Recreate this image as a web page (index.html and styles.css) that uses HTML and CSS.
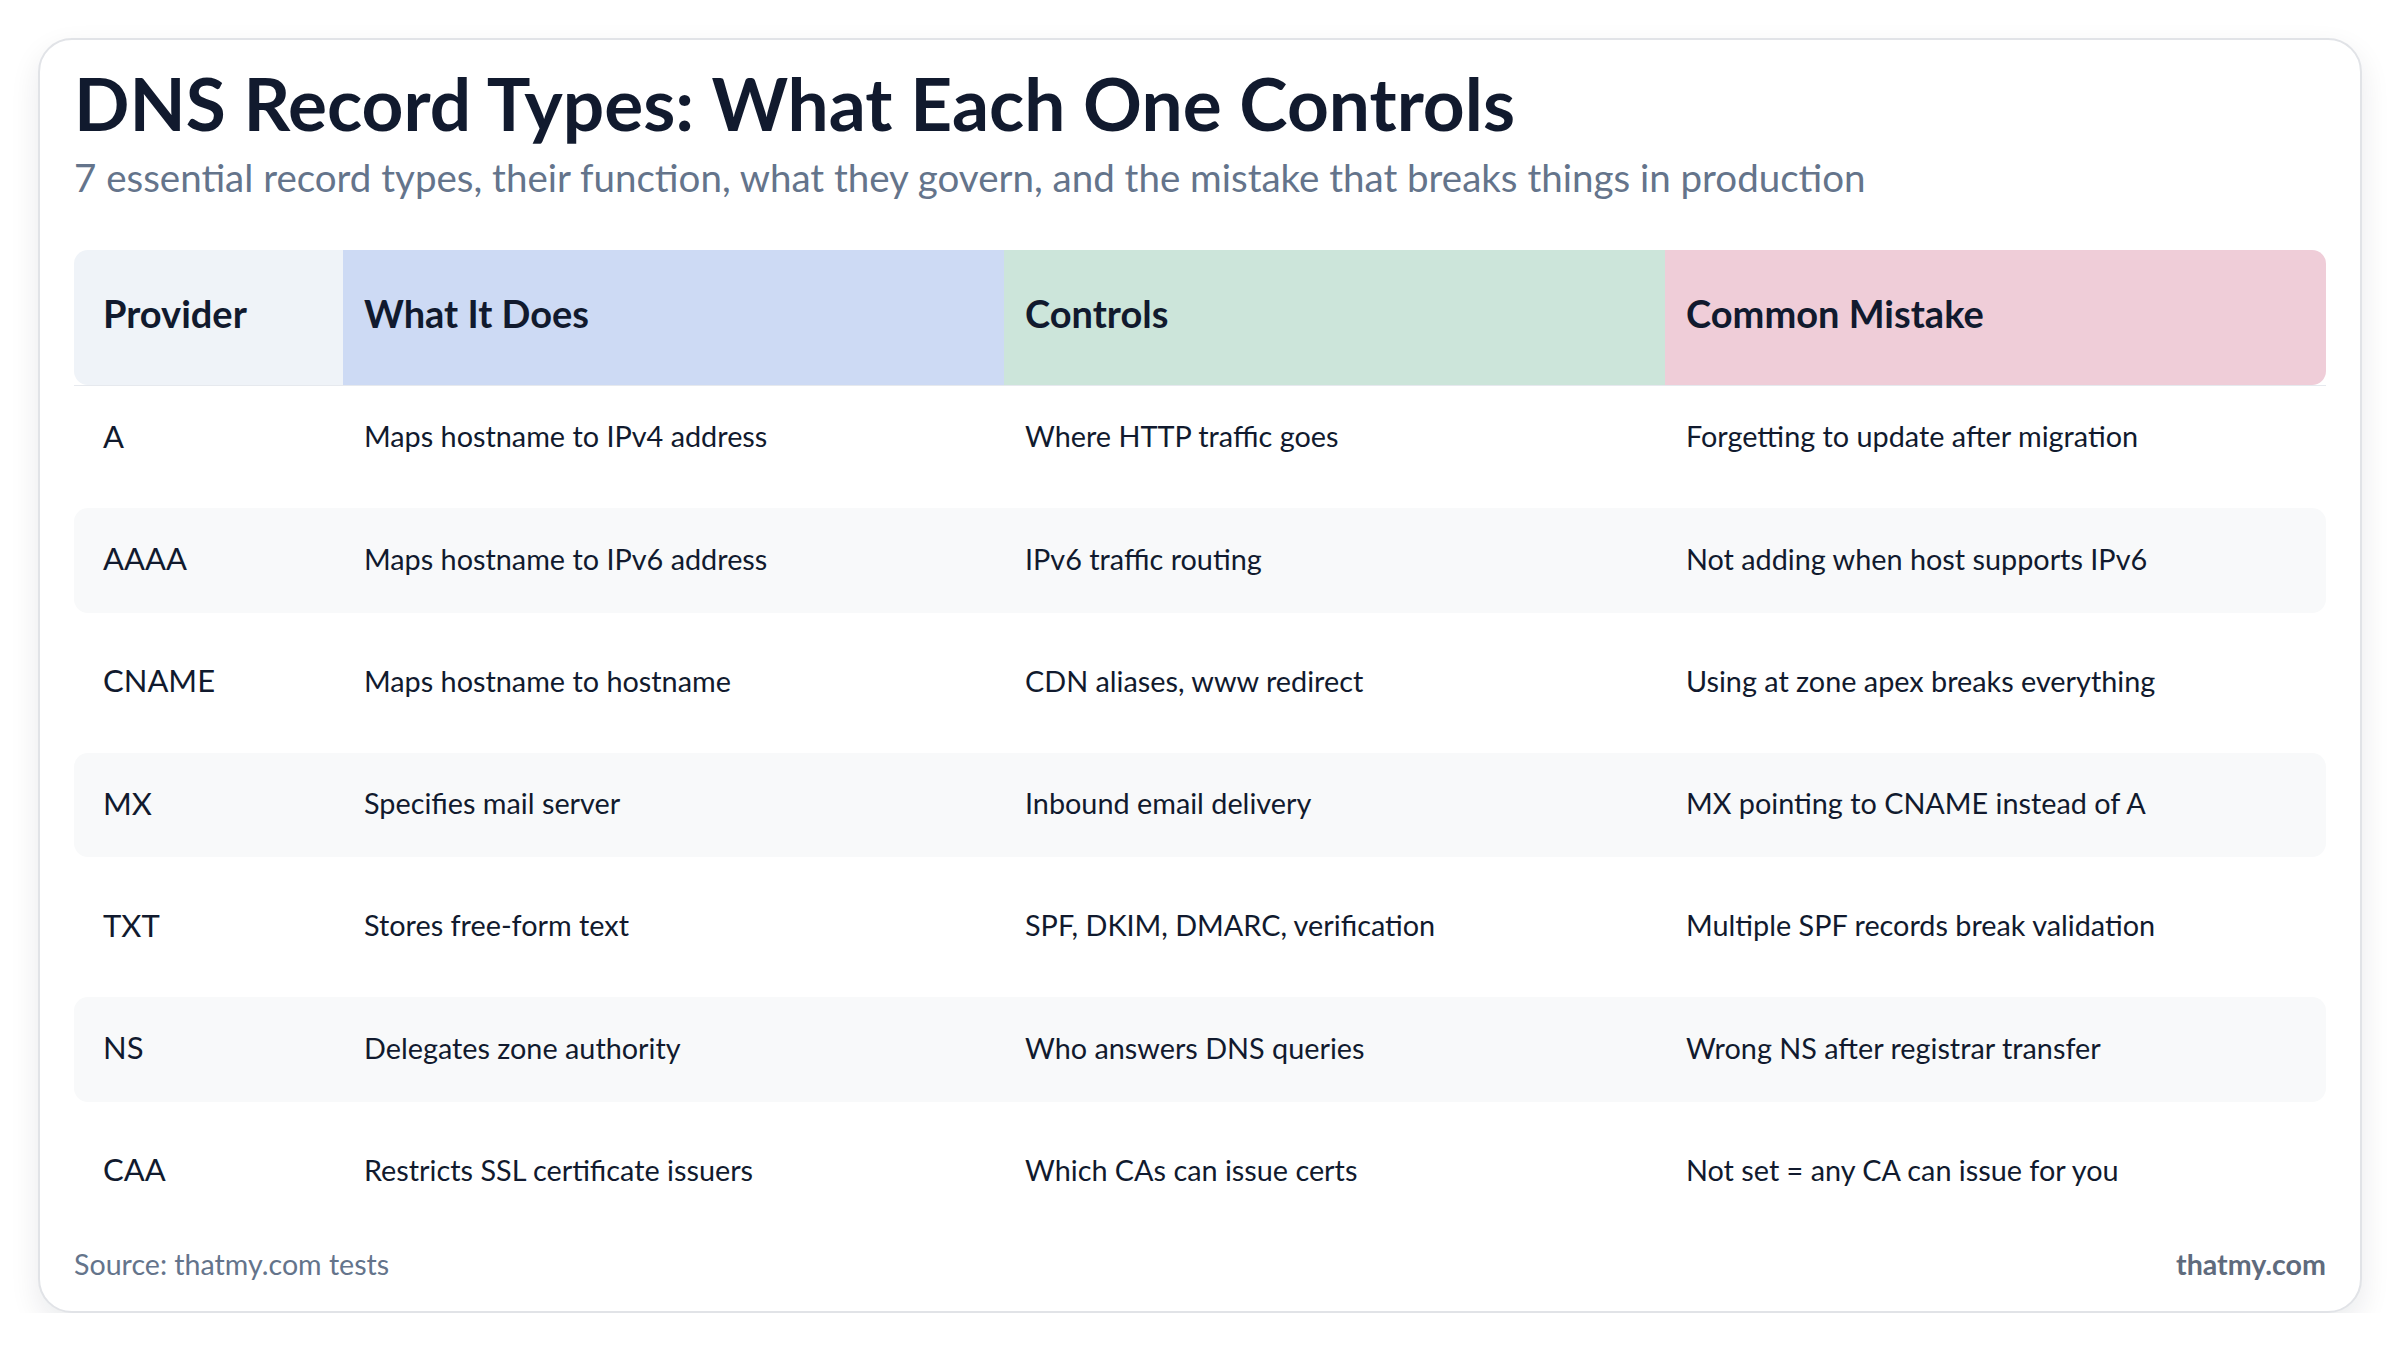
FILE: index.html
```html
<!DOCTYPE html>
<html lang="en">
<head>
<meta charset="utf-8">
<title>DNS Record Types</title>
<link rel="stylesheet" href="styles.css">
</head>
<body>
<main class="card">
  <h1 class="title">DNS Record Types: What Each One Controls</h1>
  <p class="subtitle">7 essential record types, their function, what they govern, and the mistake that breaks things in production</p>

  <div class="table">
    <div class="thead">
      <div class="hrow">
        <div class="hcell h-provider">Provider</div>
        <div class="hcell h-does">What It Does</div>
        <div class="hcell h-controls">Controls</div>
        <div class="hcell h-mistake">Common Mistake</div>
      </div>
    </div>
    <div class="tbody">
      <div class="row">
        <div class="cell type">A</div>
        <div class="cell">Maps hostname to IPv4 address</div>
        <div class="cell">Where HTTP traffic goes</div>
        <div class="cell">Forgetting to update after migration</div>
      </div>
      <div class="row striped">
        <div class="cell type">AAAA</div>
        <div class="cell">Maps hostname to IPv6 address</div>
        <div class="cell">IPv6 traffic routing</div>
        <div class="cell">Not adding when host supports IPv6</div>
      </div>
      <div class="row">
        <div class="cell type">CNAME</div>
        <div class="cell">Maps hostname to hostname</div>
        <div class="cell">CDN aliases, www redirect</div>
        <div class="cell">Using at zone apex breaks everything</div>
      </div>
      <div class="row striped">
        <div class="cell type">MX</div>
        <div class="cell">Specifies mail server</div>
        <div class="cell">Inbound email delivery</div>
        <div class="cell">MX pointing to CNAME instead of A</div>
      </div>
      <div class="row">
        <div class="cell type">TXT</div>
        <div class="cell">Stores free-form text</div>
        <div class="cell">SPF, DKIM, DMARC, verification</div>
        <div class="cell">Multiple SPF records break validation</div>
      </div>
      <div class="row striped">
        <div class="cell type">NS</div>
        <div class="cell">Delegates zone authority</div>
        <div class="cell">Who answers DNS queries</div>
        <div class="cell">Wrong NS after registrar transfer</div>
      </div>
      <div class="row">
        <div class="cell type">CAA</div>
        <div class="cell">Restricts SSL certificate issuers</div>
        <div class="cell">Which CAs can issue certs</div>
        <div class="cell">Not set = any CA can issue for you</div>
      </div>
    </div>
  </div>

  <footer class="footer">
    <span class="source">Source: thatmy.com tests</span>
    <span class="brand">thatmy.com</span>
  </footer>
</main>
</body>
</html>
```
FILE: styles.css
```css
html, body {
  margin: 0;
  padding: 0;
  background: #ffffff;
}

body {
  font-family: Lato, "Open Sans", "Noto Sans", sans-serif;
  color: #111827;
  padding: 38px 0 0 38px;
}

.card {
  box-sizing: border-box;
  width: 2324px;
  background: #ffffff;
  border: 2px solid #e1e3e7;
  border-radius: 34px;
  box-shadow: 0 12px 30px rgba(15, 23, 42, 0.09);
  padding: 20px 34px 30px 34px;
  display: flex;
  flex-direction: column;
}

.title {
  margin: 0;
  font-size: 73px;
  line-height: 1.2;
  font-weight: 700;
  color: #111a2e;
  letter-spacing: 0;
}

.subtitle {
  margin: 6px 0 50px 0;
  font-size: 38.5px;
  line-height: 1.2;
  font-weight: 400;
  color: #64748b;
}

.table {
  display: flex;
  flex-direction: column;
}

.thead {
  border-bottom: 1px solid #e6e9ee;
}

.hrow {
  display: grid;
  grid-template-columns: 269px 1fr 1fr 1fr;
  height: 135px;
  border-radius: 14px;
  overflow: hidden;
}

.hcell {
  display: flex;
  align-items: center;
  padding: 0 21px 8px 21px;
  font-size: 38px;
  font-weight: 700;
  color: #111a2e;
}

.h-provider { background: #eff3f8; padding-left: 29px; }
.h-does { background: #cddaf4; }
.h-controls { background: #cce5da; }
.h-mistake { background: #efcdd8; }

.tbody {
  display: flex;
  flex-direction: column;
  gap: 17.75px;
}

.row {
  display: grid;
  grid-template-columns: 269px 1fr 1fr 1fr;
  height: 104.5px;
  border-radius: 14px;
}

.row.striped {
  background: #f8f9fa;
}

.cell {
  display: flex;
  align-items: center;
  padding: 0 21px 3px 21px;
  font-size: 28.8px;
  line-height: 1.2;
  color: #111a2e;
}

.cell.type {
  padding-left: 29px;
  font-size: 31px;
}

.footer {
  display: flex;
  justify-content: space-between;
  align-items: baseline;
  margin-top: 23px;
  font-size: 28.6px;
  line-height: 1.2;
  color: #64748b;
}

.brand {
  font-weight: 700;
  color: #5f6b7d;
}
```
